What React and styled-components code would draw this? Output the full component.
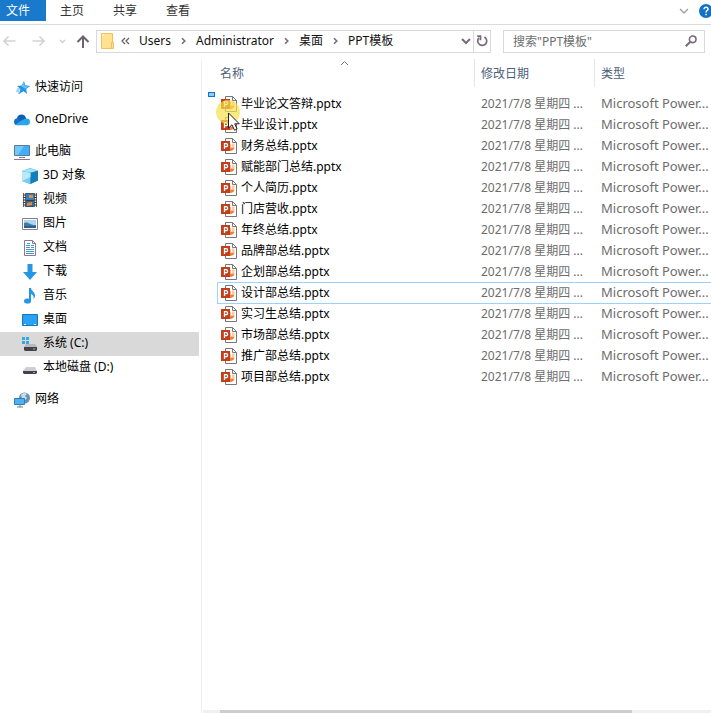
import React from "react";
import styled, { createGlobalStyle } from "styled-components";

const Global = createGlobalStyle`
  * { box-sizing: border-box; }
  body { margin: 0; background: #fff; overflow: hidden; }
  body, button, input {
    font-family: "Noto Sans", "Noto Sans CJK SC", sans-serif;
    font-size: 12px;
    color: #000;
  }
  button { padding: 0; border: 0; background: none; text-align: left; }
  svg { display: block; flex: none; }
`;

const Window = styled.div`
  display: flex;
  flex-direction: column;
  min-height: 100vh;
`;

const Ribbon = styled.div`
  display: flex;
  height: 25px;
  border-bottom: 1px solid #dadbdc;
`;

const Tab = styled.button`
  width: ${(p) => (p.$active ? 46 : 53)}px;
  height: 21px;
  padding-left: ${(p) => (p.$active ? 6 : 14)}px;
  line-height: 20px;
  color: ${(p) => (p.$active ? "#fff" : "#333")};
  background: ${(p) => (p.$active ? "#1979ca" : "transparent")};
`;

const RibbonTools = styled.div`
  display: flex;
  align-items: center;
  gap: 10px;
  height: 22px;
  margin-left: auto;
  overflow: hidden;
`;

const HelpButton = styled.button`
  width: 12px;
  overflow: hidden;
`;

const NavBar = styled.div`
  display: flex;
  align-items: center;
  height: 34px;
  padding: 0 6px 2px 0;
`;

const NavButtons = styled.div`
  display: flex;
  align-items: center;
  width: 96px;
  padding-left: 2px;
`;

const NavButton = styled.button`
  width: ${(p) => p.$width}px;
`;

const AddressBar = styled.div`
  display: flex;
  flex: 1;
  align-items: center;
  height: 23px;
  min-width: 0;
  padding-left: 4px;
  border: 1px solid #d9d9d9;
`;

const Crumbs = styled.nav`
  display: flex;
  flex: 1;
  align-items: center;
  gap: 9px;
  padding-left: 6px;
  min-width: 0;
`;

const Crumb = styled.a`
  color: #111;
  line-height: 20px;
  text-decoration: none;
  white-space: nowrap;
`;

const RefreshButton = styled.button`
  display: flex;
  align-items: center;
  justify-content: center;
  width: 17px;
  height: 21px;
  margin-left: 2px;
  border-left: 1px solid #d9d9d9;
`;

const SearchBox = styled.label`
  display: flex;
  align-items: center;
  width: 202px;
  height: 23px;
  margin-left: 12px;
  padding: 0 7px 0 9px;
  border: 1px solid #d9d9d9;
`;

const SearchInput = styled.input`
  flex: 1;
  min-width: 0;
  padding: 0;
  border: 0;
  outline: 0;
  background: none;
  &::placeholder { color: #6d6d6d; opacity: 1; }
`;

const Body = styled.div`
  display: flex;
  flex: 1;
`;

const Sidebar = styled.nav`
  display: flex;
  flex-direction: column;
  gap: 8px;
  flex: none;
  width: 202px;
  padding: 17px 2px 0 0;
  border-right: 1px solid #f0f0f0;
`;

const Group = styled.div`
  display: flex;
  flex-direction: column;
`;

const Place = styled.a`
  display: flex;
  align-items: center;
  gap: 5px;
  height: 24px;
  padding-left: ${(p) => (p.$nested ? 22 : 14)}px;
  color: #000;
  background: ${(p) => (p.$selected ? "#d9d9d9" : "transparent")};
  text-decoration: none;
  white-space: nowrap;
`;

const PlaceLabel = styled.span`
  height: 24px;
  line-height: 22px;
`;

const Content = styled.main`
  position: relative;
  display: flex;
  flex: 1;
  flex-direction: column;
  min-width: 0;
`;

const Files = styled.table`
  width: calc(100% - 15px);
  margin-left: 15px;
  border-collapse: separate;
  border-spacing: 0;
  table-layout: fixed;
`;

const HeadCell = styled.th`
  width: ${(p) => (p.$width ? `${p.$width}px` : "auto")};
  height: 34px;
  padding: 0;
  font-weight: 400;
  text-align: left;
  vertical-align: top;
`;

const HeadButton = styled.button`
  position: relative;
  width: 100%;
  height: 28px;
  padding-left: ${(p) => (p.$first ? 3 : 6)}px;
  border-left: ${(p) => (p.$first ? "0" : "1px solid #dfe7ee")};
  color: #4c607a;
`;

const SortMark = styled.span`
  position: absolute;
  top: 1px;
  left: 50%;
  margin-left: -6px;
`;

const FileRow = styled.tr`
  td { box-shadow: ${(p) => (p.$focused ? "inset 0 1px #99d1ff, 0 1px #99d1ff" : "none")}; }
  td:first-child { border-left: 1px solid ${(p) => (p.$focused ? "#99d1ff" : "transparent")}; }
`;

const Cell = styled.td`
  height: 21px;
  padding: 0 0 0 7px;
  color: #6d6d6d;
  line-height: 21px;
  overflow: hidden;
  white-space: nowrap;
`;

const NameCell = styled(Cell)`
  padding-left: 3px;
  color: #000;
`;

const TypeCell = styled(Cell)`
  font-size: 13px;
`;

const FileName = styled.span`
  display: flex;
  align-items: center;
  gap: 4px;
  height: 21px;
`;

const Selection = styled.div`
  position: absolute;
  top: 33px;
  left: 6px;
  width: 7px;
  height: 5px;
  border: 1px solid #0078d7;
  background: #99c9ef;
`;

const Pointer = styled.div`
  position: absolute;
  top: 41px;
  left: 14px;
  pointer-events: none;
`;

const ScrollBar = styled.div`
  height: 3px;
  margin-top: auto;
  margin-left: 1px;
  padding-left: 17px;
  background: #f0f0f0;
`;

const ScrollThumb = styled.div`
  width: 84%;
  height: 3px;
  background: #cdcdcd;
`;

const Line = ({ w, h, d, color = "#6d6370", width = 2 }) => (
  <svg width={w} height={h} viewBox={`0 0 ${w} ${h}`} fill="none" stroke={color} strokeWidth={width}>
    <path d={d} />
  </svg>
);

const Separator = () => <Line w={7} h={8} d="M2 1.2 4.8 4 2 6.8" color="#786a78" width={1.6} />;

const FolderIcon = () => (
  <svg width="14" height="17" viewBox="0 0 14 17">
    <path d="M.5.5h11v15H.5z" fill="#ffe391" stroke="#f6bd59" />
    <path d="M10.5 9.5h2v6h-2z" fill="#ffe391" stroke="#f6bd59" />
    <path d="m1 3 2-2" stroke="#fff" />
  </svg>
);

const PptIcon = () => (
  <svg width="16" height="16" viewBox="0 0 16 16">
    <path d="M4.5.5h7l4 4v11h-11z" fill="#fff" stroke="#777" />
    <path d="M11.5.5v4h4" fill="none" stroke="#777" />
    <path d="M9 6h1v3H9z" fill="#f4b183" />
    <path d="M11 5.5h2.5V9H11z" fill="#ffc9a3" />
    <path d="M9 9.5h4.5c0 2-2 3.5-4.5 3.5z" fill="#e8833a" />
    <path d="M0 3h9v10H0z" fill="#c43e1c" />
    <path d="M3.5 11V5.7h1.6a1.5 1.5 0 0 1 0 3H3.5" fill="none" stroke="#fff" strokeWidth="1.3" />
  </svg>
);

const drawings = {
  star: (
    <>
      <path d="m10 1 1.2 4.2L16 6l-3.8 3 .9 5L9.5 11.2 5 14l1.3-5L3 6l4.7-.5z" fill="#2695e3" />
      <path d="m10 2 .8 4 4 .4-3.6 2.4-4-2.6z" fill="#6bc1f3" />
      <path d="M3 9h3M2 11h3M4 13h2" stroke="#58afe8" />
    </>
  ),
  cloud: (
    <>
      <circle cx="7.5" cy="7" r="4.6" fill="#0f5fb4" />
      <circle cx="3.5" cy="9.8" r="3.5" fill="#1370ca" />
      <circle cx="12.6" cy="9.8" r="3.4" fill="#2aa4ec" />
      <path d="M1.5 12.6 9 7.6l5 2.2-1.4 3.5H3.5z" fill="#2aa4ec" />
    </>
  ),
  pc: (
    <>
      <path d="M.5 1.5h15v10H.5z" fill="#3fb0f5" stroke="#5f7896" />
      <path d="M1 2h9l-6 9H1z" fill="#73c8fa" />
      <path d="M5 13.5h6M0 15.5h16" stroke="#8a7890" />
    </>
  ),
  cube: (
    <>
      <path d="m8 0 8 2.5v10L8 16 0 13V3z" fill="#35a8df" />
      <path d="m0 3 8-2.7 8 2.4-7.5 2z" fill="#a6e3f8" />
      <path d="m0 3.2 8.5 1.6V16L0 13z" fill="#7accec" />
      <path d="M8.5 4.8 16 2.7v9.8L8.5 16z" fill="#147eb8" />
      <path d="m0 13 8.5-4V5L0 3.2z" fill="#bce9f7" />
    </>
  ),
  film: (
    <>
      <path d="M1 1h14v14H1z" fill="#3d3b3c" />
      <path d="M4 1.5h8V8H4z" fill="#327ebd" />
      <path d="M4 9h8v5.5H4z" fill="#2d6ca1" />
      <path d="M7 3h4v3H7zM5 11l5-1v3l-5 1z" fill="#e88b3b" />
      <path d="M2.5 1v14M13.5 1v14" stroke="#eee" strokeWidth="1.5" strokeDasharray="1.5 1" />
    </>
  ),
  picture: (
    <>
      <path d="M.5 2.5h15v11H.5z" fill="#fff" stroke="#8a7890" />
      <path d="M2 4h12v8H2z" fill="#a8d7f3" />
      <path d="M2 7c4-2 5 2 12 2v3H2z" fill="#437b9e" />
      <path d="M2 10h12v2H2z" fill="#295f95" />
    </>
  ),
  doc: (
    <>
      <path d="M2.5.5h8l3 3v12h-11z" fill="#fff" stroke="#8a7890" />
      <path d="M10.5.5v3h3" fill="none" stroke="#8a7890" />
      <path d="M5 3.5h3M4 5.5h4M9 5.5h3M4 7.5h4M9 7.5h3M4 9.5h8M4 11.5h8M4 13.5h8" stroke="#4796c9" />
    </>
  ),
  down: <path d="M5.5 0h5v8H15l-7 8-7-8h4.5z" fill="#2496e5" />,
  music: (
    <>
      <path d="M7 0h2c.3 3 4 4 4 7.5 0 1.5-.5 2.5-1.5 3.5.5-3-.5-4.3-2.5-5v7H7z" fill="#2496e5" />
      <ellipse cx="5.5" cy="13" rx="3.5" ry="2.6" fill="#2496e5" />
    </>
  ),
  desktop: (
    <>
      <path d="M.5 2.5h15v11H.5z" fill="#2aa2f1" stroke="#1776b7" />
      <path d="M2 12.5h2M12 12.5h2" stroke="#d5effc" />
    </>
  ),
  system: (
    <>
      <path d="M0 1h3v3H0zM4 1h3v3H4zM0 5h3v3H0zM4 5h3v3H4z" fill="#32a8e7" />
      <path d="M4 8h9l2 3H2z" fill="#b9b9bd" />
      <path d="M2 11h13v3l-1 1H3l-1-1z" fill="#46424b" />
      <path d="M11 13h2" stroke="#8fc0a0" />
    </>
  ),
  disk: (
    <>
      <path d="M4 7h9l2 4H1z" fill="#cfcfd1" />
      <path d="M1 11h14v2l-1 1H2l-1-1z" fill="#46424b" />
      <path d="M11 12.5h2" stroke="#9d9aa2" />
    </>
  ),
  network: (
    <>
      <circle cx="10.5" cy="6" r="5.5" fill="#6692b9" />
      <path d="M7 3c2-3 5-2 6-1l-2 2 2 2-2 2-3-2z" fill="#c5deed" />
      <path d="M.5 6.5h10v6H.5z" fill="#48b3f1" stroke="#397bae" />
      <path d="M3 15h6" stroke="#6d809a" />
      <path d="M6 13v2" stroke="#6d809a" />
    </>
  ),
};

const groups = [
  [{ icon: "star", label: "快速访问" }],
  [{ icon: "cloud", label: "OneDrive" }],
  [
    { icon: "pc", label: "此电脑" },
    { icon: "cube", label: "3D 对象", nested: true },
    { icon: "film", label: "视频", nested: true },
    { icon: "picture", label: "图片", nested: true },
    { icon: "doc", label: "文档", nested: true },
    { icon: "down", label: "下载", nested: true },
    { icon: "music", label: "音乐", nested: true },
    { icon: "desktop", label: "桌面", nested: true },
    { icon: "system", label: "系统 (C:)", nested: true, selected: true },
    { icon: "disk", label: "本地磁盘 (D:)", nested: true },
  ],
  [{ icon: "network", label: "网络" }],
];

const files = [
  "毕业论文答辩", "毕业设计", "财务总结", "赋能部门总结", "个人简历", "门店营收", "年终总结",
  "品牌部总结", "企划部总结", "设计部总结", "实习生总结", "市场部总结", "推广部总结", "项目部总结",
];

const crumbs = ["Users", "Administrator", "桌面", "PPT模板"];

export default function App() {
  return (
    <Window>
      <Global />
      <Ribbon>
        <Tab $active>文件</Tab>
        <Tab>主页</Tab>
        <Tab>共享</Tab>
        <Tab>查看</Tab>
        <RibbonTools>
          <button aria-label="展开功能区">
            <Line w={10} h={6} d="m1 1 4 4 4-4" color="#a0a0a0" width={1.4} />
          </button>
          <HelpButton aria-label="帮助">
            <svg width="14" height="14" viewBox="0 0 14 14">
              <circle cx="7" cy="7" r="7" fill="#1173c7" />
              <path d="M5 5.2C5 2.6 9.3 2.7 9 5.2 8.9 6.5 7 6.6 7 8.4M7 9.7v1.5" fill="none" stroke="#fff" strokeWidth="1.5" />
            </svg>
          </HelpButton>
        </RibbonTools>
      </Ribbon>

      <NavBar>
        <NavButtons>
          <NavButton $width={30} aria-label="后退">
            <Line w={14} h={12} d="M13.5 6H2M6.5 1.5 2 6l4.5 4.5" color="#d2d2d2" width={1.6} />
          </NavButton>
          <NavButton $width={27} aria-label="前进">
            <Line w={14} h={12} d="M.5 6H12M7.5 1.5 12 6l-4.5 4.5" color="#d2d2d2" width={1.6} />
          </NavButton>
          <NavButton $width={17} aria-label="最近位置">
            <Line w={7} h={5} d="m1 1 2.5 2.5L6 1" color="#cfcfcf" width={1.4} />
          </NavButton>
          <NavButton $width={14} aria-label="上移">
            <Line w={14} h={13} d="M7 13V2M1.5 7 7 1.5 12.5 7" />
          </NavButton>
        </NavButtons>
        <AddressBar>
          <FolderIcon />
          <Crumbs>
            <Line w={9} h={8} d="M4 1 1 4l3 3M8 1 5 4l3 3" color="#68606a" width={1.3} />
            {crumbs.map((name, i) => (
              <React.Fragment key={name}>
                {i > 0 && <Separator />}
                <Crumb href="#">{name}</Crumb>
              </React.Fragment>
            ))}
          </Crumbs>
          <button aria-label="以前的位置">
            <Line w={10} h={7} d="m1 1 4 4 4-4" color="#786a78" />
          </button>
          <RefreshButton aria-label="刷新">
            <svg width="12" height="12" viewBox="0 0 12 12" fill="none" stroke="#786a78" strokeWidth="1.7">
              <path d="M8.4 2A4.5 4.5 0 1 1 3 2.8" />
              <path d="M1.2 1.2h3.3v4" />
            </svg>
          </RefreshButton>
        </AddressBar>
        <SearchBox>
          <SearchInput type="text" aria-label="搜索" placeholder={'搜索"PPT模板"'} />
          <svg width="12" height="12" viewBox="0 0 12 12" fill="none" stroke="#786a78">
            <circle cx="7.7" cy="4.3" r="3.3" strokeWidth="1.6" />
            <path d="M5.3 6.7.8 11.2" strokeWidth="2" />
          </svg>
        </SearchBox>
      </NavBar>

      <Body>
        <Sidebar>
          {groups.map((places) => (
            <Group key={places[0].label}>
              {places.map((p) => (
                <Place key={p.label} href="#" $nested={p.nested} $selected={p.selected}>
                  <svg width="16" height="16" viewBox="0 0 16 16">{drawings[p.icon]}</svg>
                  <PlaceLabel>{p.label}</PlaceLabel>
                </Place>
              ))}
            </Group>
          ))}
        </Sidebar>
        <Content>
          <Files>
            <thead>
              <tr>
                <HeadCell $width={257}>
                  <HeadButton $first>
                    名称
                    <SortMark><Line w={9} h={6} d="m1 5 3.5-3.5L8 5" color="#777" width={1} /></SortMark>
                  </HeadButton>
                </HeadCell>
                <HeadCell $width={120}><HeadButton>修改日期</HeadButton></HeadCell>
                <HeadCell><HeadButton>类型</HeadButton></HeadCell>
              </tr>
            </thead>
            <tbody>
              {files.map((name) => (
                <FileRow key={name} $focused={name === "设计部总结"}>
                  <NameCell><FileName><PptIcon />{name}.pptx</FileName></NameCell>
                  <Cell>2021/7/8 星期四 ...</Cell>
                  <TypeCell>Microsoft Power...</TypeCell>
                </FileRow>
              ))}
            </tbody>
          </Files>
          <Selection />
          <Pointer>
            <svg width="26" height="32" viewBox="0 0 26 32">
              <circle cx="12" cy="12" r="12" fill="#f7df4d" fillOpacity=".7" />
              <path d="M12.5 13v15l3.5-3.2 2.5 5.4 2.6-1.2-2.4-5.2h4.6z" fill="#fff" stroke="#222" />
            </svg>
          </Pointer>
          <ScrollBar><ScrollThumb /></ScrollBar>
        </Content>
      </Body>
    </Window>
  );
}
